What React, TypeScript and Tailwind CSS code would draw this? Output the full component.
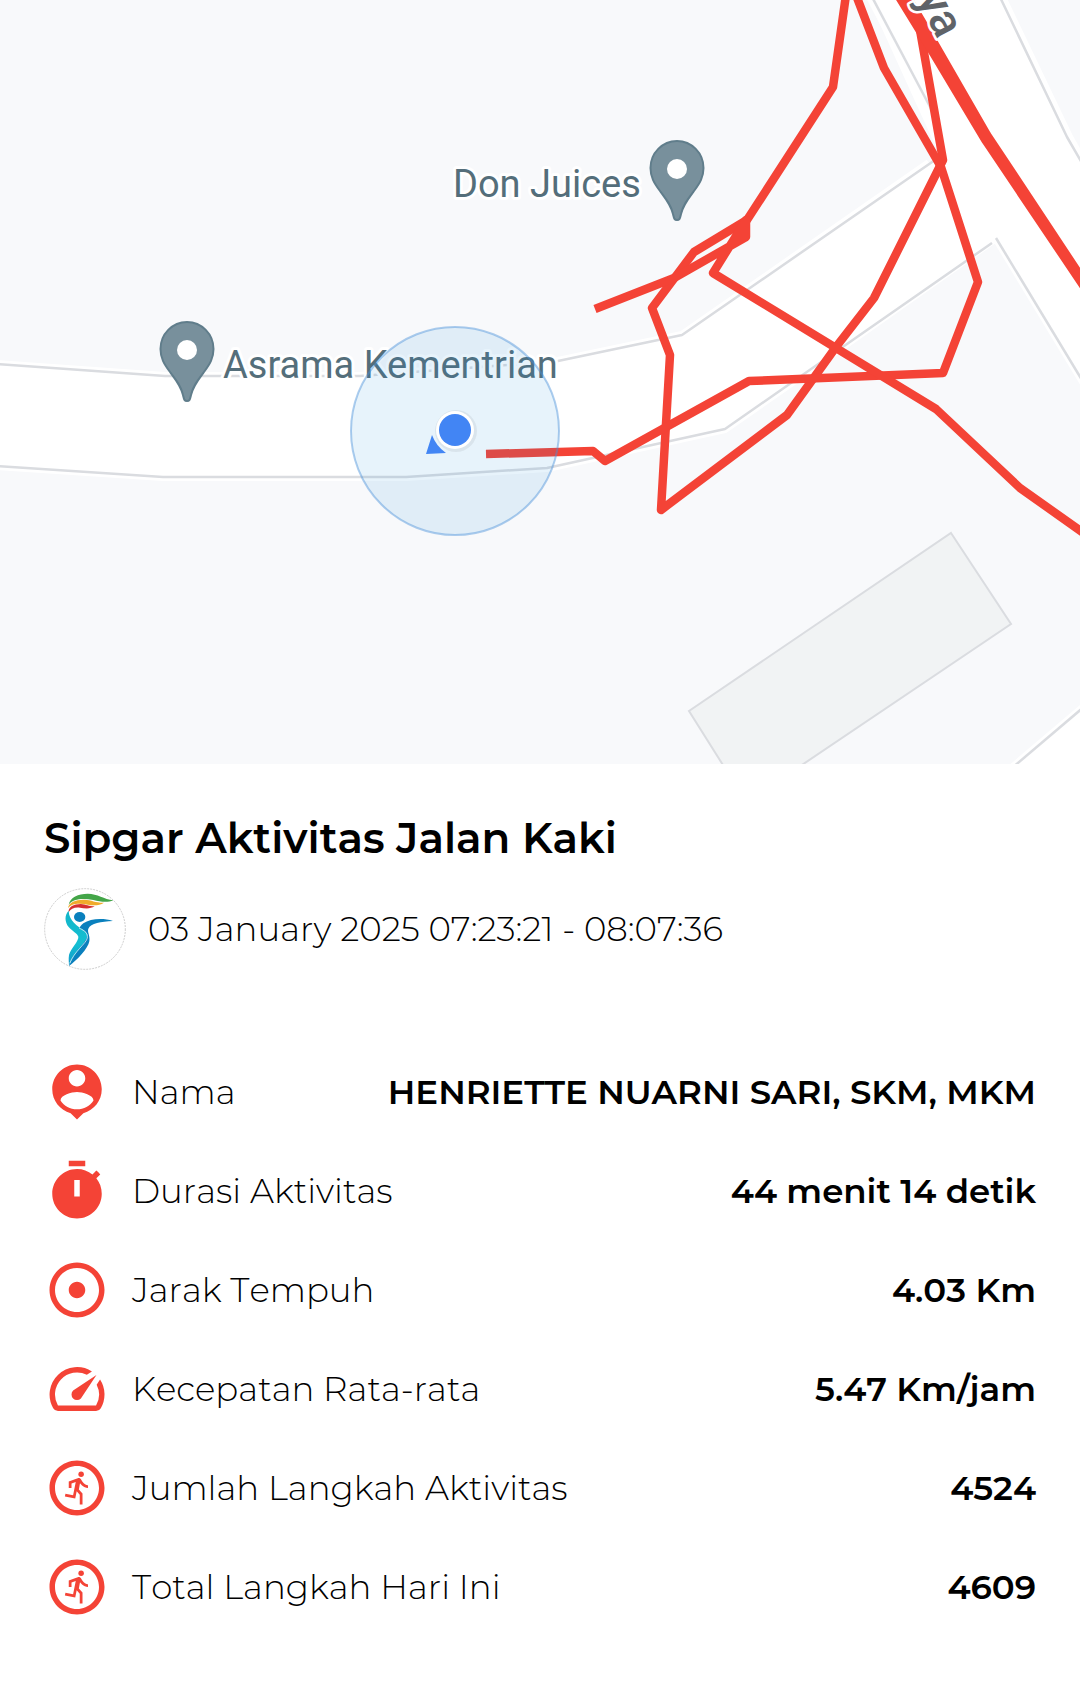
import React from 'react'
import { MdAdjust, MdSpeed, MdOutlineRunCircle } from 'react-icons/md'

const PersonPinIcon = () => (
  <svg viewBox="0 0 24 24" className="w-full h-full" fill="currentColor" aria-hidden="true">
    <path d="M12 2c-4.97 0-9 4.03-9 9 0 4.17 2.84 7.67 6.69 8.69L12 22l2.31-2.31C18.16 18.67 21 15.17 21 11c0-4.97-4.03-9-9-9zm0 2c1.66 0 3 1.34 3 3s-1.34 3-3 3-3-1.34-3-3 1.34-3 3-3zm0 14.3c-2.5 0-4.71-1.28-6-3.22.03-1.99 4-3.08 6-3.08 1.99 0 5.97 1.09 6 3.08-1.29 1.94-3.5 3.22-6 3.22z" />
  </svg>
)

const TimerIcon = () => (
  <svg viewBox="0 0 24 24" className="w-full h-full" fill="currentColor" fillRule="evenodd" aria-hidden="true">
    <path d="M15 1H9v2h6V1zm-4 13h2V8h-2v6zm8.03-6.61l1.42-1.42c-.43-.51-.9-.99-1.41-1.41l-1.42 1.42C16.07 4.74 14.12 4 12 4c-4.97 0-9 4.03-9 9s4.02 9 9 9 9-4.03 9-9c0-2.12-.74-4.07-1.97-5.61z" />
  </svg>
)

const Logo = () => (
  <svg viewBox="42 54 246 246" className="w-[82px] h-[82px] shrink-0" role="img" aria-label="Sipgar">
    <defs>
      <linearGradient id="teal" x1="0" y1="0" x2="0" y2="1">
        <stop offset="0" stopColor="#12b5c9" />
        <stop offset="0.6" stopColor="#14bfd2" />
        <stop offset="1" stopColor="#1296c8" />
      </linearGradient>
    </defs>
    <circle cx="165" cy="177" r="121" fill="white" stroke="#b5b5b5" strokeWidth="2" strokeDasharray="6 3" />
    <path d="M116 104C120 82 145 71 173 71C203 71 222 88 250 91C234 98 212 96 190 90C160 84 130 85 116 104Z" fill="#43a548" />
    <path d="M114 115C116 96 140 88 163 89C185 90 199 99 222 98C207 108 189 106 173 104C148 99 123 100 114 115Z" fill="#f0ab2a" />
    <path d="M116 127C114 110 132 102 152 102C168 103 177 109 194 109C180 118 163 115 150 113C134 111 122 116 116 127Z" fill="#d5302f" />
    <path d="M116 122C103 135 104 156 116 171C127 184 142 190 145 200C147 213 121 237 117 255C115 268 117 279 117 288C125 263 156 234 171 211C177 200 172 190 162 181C142 168 117 153 116 122Z" fill="url(#teal)" />
    <path d="M249 153C218 143 181 146 160 160C152 166 150 171 149 174C163 180 171 187 172 194C172 216 136 240 117 288C142 270 174 236 178 214C181 196 171 186 175 176C182 160 213 155 249 153Z" fill="#0a80bd" />
    <path d="M147 174C166 183 174 191 172 204C169 220 132 245 119 280" fill="none" stroke="white" strokeWidth="2" />
    <ellipse cx="149" cy="141" rx="17" ry="15" fill="#0a80bd" />
  </svg>
)

const Pin = () => (
  <>
    <path
      d="M0 0C-3 0 -3 -2 -4 -6C-6 -15 -11 -21 -17 -29C-23 -37 -26.500 -43 -26.500 -52A26.500 27 0 0 1 26.500 -52C26.500 -43 23 -37 17 -29C11 -21 6 -15 4 -6C3 -2 3 0 0 0Z"
      fill="#78909c"
      stroke="#607d8b"
      strokeWidth="2"
    />
    <circle cx="0" cy="-51" r="10" fill="white" />
  </>
)

const RouteMap = () => (
  <svg viewBox="0 0 1080 764" className="block w-full h-auto bg-[#f8f9fb]" role="img" aria-label="Peta rute aktivitas">
    {/* roads */}
    <path
      d="M0 364L165 376H360L558 361L682 335L929 163L940 156L869 0H1001L1069 137L1080 157V377L996 238L791 383L725 429L547 468L406 477H163L0 466Z"
      fill="white"
    />
    <path d="M1017 764L1080 710V764Z" fill="white" />
    <g fill="none" strokeLinejoin="round">
      <g stroke="white" strokeWidth="8">
        <path d="M-5 364L165 376H360L558 361L682 335L929 163" />
        <path d="M869 -5L935 120L944 155" />
        <path d="M1001 -5L1069 137L1085 165" />
        <path d="M-5 466L163 477H406L547 468L725 429L791 383L996 238L1085 385" />
        <path d="M1012 768L1085 706" />
      </g>
      <g stroke="#dadce0" strokeWidth="2.500">
        <path d="M-5 364L165 376H360L558 361L682 335L935 160" />
        <path d="M871 -5L937 120" />
        <path d="M999 -5L1067 137L1085 168" />
        <path d="M-5 466L163 477H406L547 468L725 429L791 383L992 243" />
        <path d="M996 238L1085 385" />
        <path d="M1012 768L1085 706" />
      </g>
    </g>
    <path d="M951 533L1011 624L790 773H728L689 711Z" fill="#f1f3f4" stroke="#dadce0" strokeWidth="2" />

    {/* walked route */}
    <g fill="none" stroke="#f44336" strokeWidth="8.500" strokeLinejoin="round">
      <path d="M846 -5L833 87L747 220L694 252L652 308L670 355L661 510L787 415L836 347L874 298L943 160L920 30" />
      <path d="M856 -5L884 68L941 167L978 282L943 373L749 381L605 461L593 451L486 454" />
      <path d="M595 309L674 278L746 237V220L713 273L936 409L1020 488L1085 534" />
      <path d="M898 -5L922 34L986 141L1085 288V283L987 135L922 22L906 -5Z" fill="#f44336" />
    </g>

    {/* places */}
    <g
      fill="#546e7a"
      stroke="white"
      strokeWidth="6"
      strokeLinejoin="round"
      paintOrder="stroke"
      fontSize="38"
      className="font-['Roboto',sans-serif]"
    >
      <text x="453" y="197">Don Juices</text>
      <text x="223" y="378">Asrama Kementrian</text>
    </g>
    <text
      x="0"
      y="0"
      transform="translate(938 40) rotate(63)"
      textAnchor="end"
      fill="#5f6368"
      stroke="white"
      strokeWidth="5"
      strokeLinejoin="round"
      paintOrder="stroke"
      fontSize="46"
      className="font-['Roboto',sans-serif] font-medium"
    >
      ya
    </text>
    <g transform="translate(677 220)">
      <Pin />
    </g>
    <g transform="translate(187 401)">
      <Pin />
    </g>

    {/* current position */}
    <circle cx="455" cy="431" r="104" fill="#2693de" fillOpacity="0.11" stroke="#4a90d9" strokeOpacity="0.45" strokeWidth="2" />
    <path d="M426 454L432 435Q436 446 446 453Z" fill="#4285f4" />
    <circle cx="456" cy="431" r="21" fill="black" fillOpacity="0.06" />
    <circle cx="455" cy="430" r="19" fill="white" />
    <circle cx="455" cy="430" r="16" fill="#4285f4" />
  </svg>
)

const stats = [
  { label: 'Nama', value: 'HENRIETTE NUARNI SARI, SKM, MKM', icon: <PersonPinIcon /> },
  { label: 'Durasi Aktivitas', value: '44 menit 14 detik', icon: <TimerIcon /> },
  { label: 'Jarak Tempuh', value: '4.03 Km', icon: <MdAdjust className="w-full h-full" /> },
  { label: 'Kecepatan Rata-rata', value: '5.47 Km/jam', icon: <MdSpeed className="w-full h-full" /> },
  { label: 'Jumlah Langkah Aktivitas', value: '4524', icon: <MdOutlineRunCircle className="w-full h-full" /> },
  { label: 'Total Langkah Hari Ini', value: '4609', icon: <MdOutlineRunCircle className="w-full h-full" /> },
]

const App = () => {
  return (
    <main className="min-h-screen bg-white text-black font-['Montserrat','Inter',sans-serif]">
      <RouteMap />
      <section className="px-[44px] pt-12 pb-16 [font-kerning:none]">
        <h1 className="text-[42px] leading-[52px] font-semibold">Sipgar Aktivitas Jalan Kaki</h1>
        <div className="flex items-center gap-[22px] mt-6">
          <Logo />
          <p className="text-[34px] leading-[44px] font-light">03 January 2025 07:23:21 - 08:07:36</p>
        </div>
        <dl className="mt-[72px]">
          {stats.map((item) => (
            <div key={item.label} className="flex items-center h-[99px]">
              <dt className="flex items-center gap-[22px] text-[34px] leading-[44px] font-light">
                <span className="w-[66px] h-[66px] shrink-0 text-[#f44336]">{item.icon}</span>
                {item.label}
              </dt>
              <dd className="ml-auto text-right text-[34px] leading-[44px] font-semibold">{item.value}</dd>
            </div>
          ))}
        </dl>
      </section>
    </main>
  )
}

export default App
